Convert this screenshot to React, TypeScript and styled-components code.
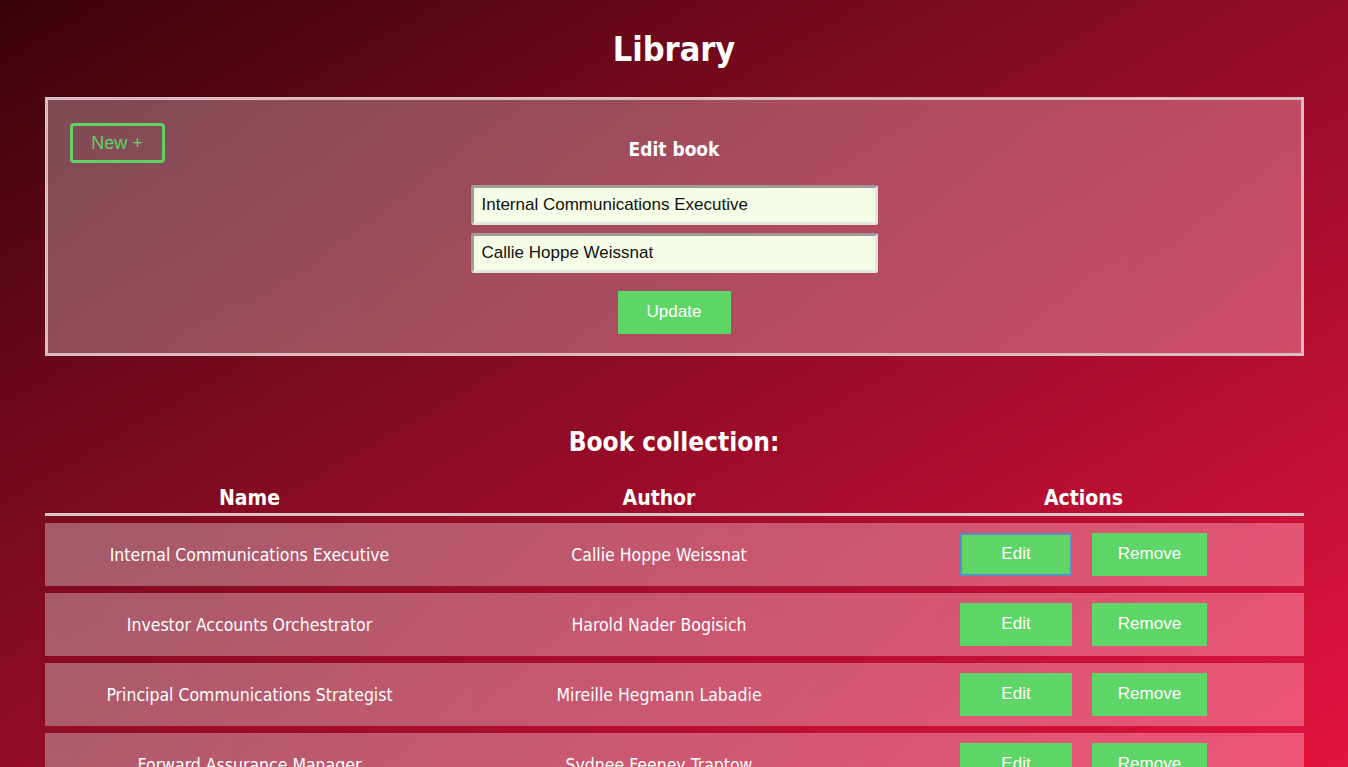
import React from "react";
import styled, { createGlobalStyle } from "styled-components";

const Global = createGlobalStyle`
  html, body { margin: 0; padding: 0; }
  html { overflow: hidden; }
  body {
    min-height: 767px;
    background: linear-gradient(150deg, #3a030c 0%, #7a0a1e 35%, #a60d2c 62%, #e4143f 100%);
    background-attachment: fixed;
    font-family: "DejaVu Sans Condensed", "DejaVu Sans", sans-serif;
    font-stretch: condensed;
    color: #fff;
  }
`;

const Page = styled.div`
  width: 1259px;
  margin: 0 auto;
  padding-top: 24px;
  display: flex;
  flex-direction: column;
`;

const Title = styled.h1`
  margin: 0 0 23px;
  text-align: center;
  font-size: 34px;
  line-height: 50px;
  font-weight: 700;
`;

const Panel = styled.section`
  border: 3px solid #dcbcc3;
  background: linear-gradient(110deg, rgba(190, 160, 168, 0.45), rgba(240, 150, 170, 0.45));
  padding: 23px 22px 19px;
  display: grid;
  grid-template-columns: 1fr auto 1fr;
  align-items: start;
`;

const NewButton = styled.button`
  justify-self: start;
  width: 95px;
  height: 40px;
  border: 3px solid #5fd264;
  border-radius: 4px;
  background: transparent;
  color: #5fd264;
  font-family: "Liberation Sans", Arial, sans-serif;
  font-size: 18px;
`;

const Form = styled.form`
  display: flex;
  flex-direction: column;
  align-items: center;
  gap: 8px;
`;

const FormTitle = styled.h3`
  margin: 12px 0 14px;
  font-size: 19px;
  line-height: 28px;
  font-weight: 700;
`;

const Input = styled.input`
  box-sizing: border-box;
  width: 407px;
  height: 40px;
  padding: 0 8px;
  border: 3px solid #a09a9a;
  border-right-color: #e4e4e0;
  border-bottom-color: #e4e4e0;
  border-radius: 3px;
  background: #f5fde7;
  font-family: "Liberation Sans", Arial, sans-serif;
  font-size: 17px;
  color: #111;
`;

const SolidButton = styled.button<{ $w: number; $focus?: boolean }>`
  width: ${(p) => p.$w}px;
  height: 43px;
  border: 2px solid ${(p) => (p.$focus ? "#5a8ec8" : "#5dd567")};
  background: #5dd567;
  color: #fff;
  font-family: "Liberation Sans", Arial, sans-serif;
  font-size: 17px;
  padding: 0 0 1px;
`;

const UpdateButton = styled(SolidButton)`
  margin-top: 10px;
`;

const SectionTitle = styled.h2`
  margin: 66px 0 22px;
  text-align: center;
  font-size: 26px;
  line-height: 40px;
  font-weight: 700;
`;

const Grid = styled.div`
  display: grid;
  grid-template-columns: 410px 409px 1fr;
  align-items: center;
  text-align: center;
`;

const HeadRow = styled(Grid)`
  border-bottom: 3px solid #d9c3c8;
  font-size: 21px;
  font-weight: 700;
  line-height: 28px;
  padding-bottom: 1px;
`;

const Row = styled(Grid)`
  height: 63px;
  margin-top: 7px;
  background: linear-gradient(100deg, rgba(200, 170, 178, 0.5), rgba(255, 150, 175, 0.5));
  font-size: 17.5px;
`;

const Cell = styled.div``;

const Actions = styled.div`
  display: flex;
  justify-content: center;
  gap: 20px;
`;

const books = [
  ["Internal Communications Executive", "Callie Hoppe Weissnat"],
  ["Investor Accounts Orchestrator", "Harold Nader Bogisich"],
  ["Principal Communications Strategist", "Mireille Hegmann Labadie"],
  ["Forward Assurance Manager", "Sydnee Feeney Traptow"],
];

export default function App() {
  return (
    <>
      <Global />
      <Page>
        <Title>Library</Title>
        <Panel>
          <NewButton>New +</NewButton>
          <Form onSubmit={(e) => e.preventDefault()}>
            <FormTitle>Edit book</FormTitle>
            <Input defaultValue="Internal Communications Executive" />
            <Input defaultValue="Callie Hoppe Weissnat" />
            <UpdateButton $w={113}>Update</UpdateButton>
          </Form>
          <Cell />
        </Panel>
        <SectionTitle>Book collection:</SectionTitle>
        <HeadRow>
          <Cell>Name</Cell>
          <Cell>Author</Cell>
          <Cell>Actions</Cell>
        </HeadRow>
        {books.map(([name, author], i) => (
          <Row key={name}>
            <Cell>{name}</Cell>
            <Cell>{author}</Cell>
            <Actions>
              <SolidButton $w={112} $focus={i === 0}>Edit</SolidButton>
              <SolidButton $w={115}>Remove</SolidButton>
            </Actions>
          </Row>
        ))}
      </Page>
    </>
  );
}
